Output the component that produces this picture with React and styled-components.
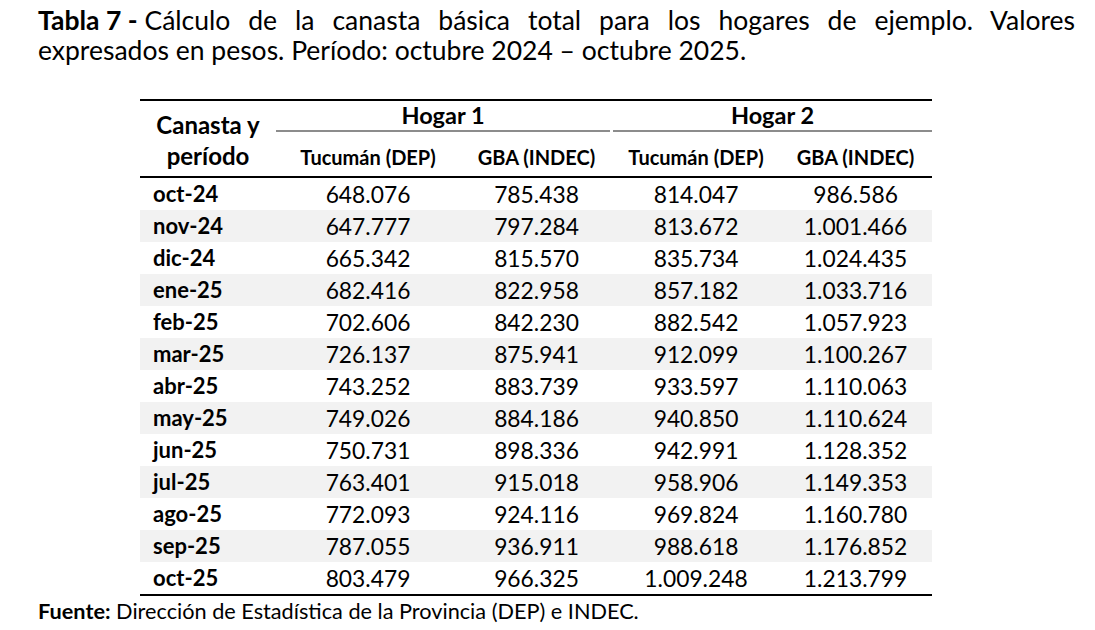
import React from 'react';
import styled, { createGlobalStyle } from 'styled-components';

const GlobalStyle = createGlobalStyle`
  html, body {
    margin: 0;
    padding: 0;
    background: #fff;
  }
  body {
    font-family: Lato, "Open Sans", sans-serif;
    color: #000;
  }
`;

const Page = styled.div`
  width: 1095px;
  height: 630px;
  box-sizing: border-box;
  padding: 5px 20px 0 38px;
  overflow: hidden;
`;

const Title = styled.div`
  width: 1037px;
  font-size: 26.5px;
  line-height: 30px;
  b {
    font-weight: 700;
  }
`;

const TitleLine = styled.div`
  white-space: nowrap;
  text-align: ${p => (p.$justify ? 'justify' : 'left')};
  text-align-last: ${p => (p.$justify ? 'justify' : 'left')};
  word-spacing: ${p => (p.$justify ? '-4px' : '0')};
`;

const Lead = styled.span`
  display: inline-block;
  word-spacing: 0;
`;

const Table = styled.table`
  margin: 34px 0 0 102px;
  width: 792px;
  border-collapse: collapse;
  table-layout: fixed;
`;

const HeadRow = styled.tr`
  height: ${p => p.$h}px;
  border-top: ${p => (p.$top ? '2px solid #000' : 'none')};
  border-bottom: ${p => (p.$bottom ? '2px solid #000' : 'none')};
`;

const CornerCell = styled.th`
  padding: 2px 0 0;
  font-size: 24px;
  font-weight: 700;
  line-height: 31px;
  text-align: center;
  vertical-align: middle;
`;

const GroupCell = styled.th`
  padding: 0;
  vertical-align: bottom;
`;

const GroupLabel = styled.div`
  margin-right: ${p => p.$gap}px;
  border-bottom: 2px solid #8c8c8c;
  font-size: 23.5px;
  font-weight: 700;
  line-height: 29px;
  text-align: center;
`;

const SubCell = styled.th`
  padding: 6px 0 0;
  font-size: 20px;
  font-weight: 700;
  text-align: center;
  vertical-align: middle;
`;

const Row = styled.tr`
  height: 32px;
  background: ${p => (p.$striped ? '#f2f2f2' : '#fff')};
  border-bottom: ${p => (p.$last ? '2px solid #000' : 'none')};
`;

const PeriodCell = styled.td`
  padding: 0 0 0 13px;
  font-size: 22px;
  font-weight: 700;
  line-height: 32px;
  text-align: left;
`;

const ValueCell = styled.td`
  padding: 0;
  font-size: 22.8px;
  line-height: 32px;
  text-align: center;
`;

const Source = styled.p`
  margin: 2px 0 0;
  font-size: 21.7px;
  line-height: 26px;
  b {
    font-weight: 700;
  }
`;

const rows = [
  ['oct-24', '648.076', '785.438', '814.047', '986.586'],
  ['nov-24', '647.777', '797.284', '813.672', '1.001.466'],
  ['dic-24', '665.342', '815.570', '835.734', '1.024.435'],
  ['ene-25', '682.416', '822.958', '857.182', '1.033.716'],
  ['feb-25', '702.606', '842.230', '882.542', '1.057.923'],
  ['mar-25', '726.137', '875.941', '912.099', '1.100.267'],
  ['abr-25', '743.252', '883.739', '933.597', '1.110.063'],
  ['may-25', '749.026', '884.186', '940.850', '1.110.624'],
  ['jun-25', '750.731', '898.336', '942.991', '1.128.352'],
  ['jul-25', '763.401', '915.018', '958.906', '1.149.353'],
  ['ago-25', '772.093', '924.116', '969.824', '1.160.780'],
  ['sep-25', '787.055', '936.911', '988.618', '1.176.852'],
  ['oct-25', '803.479', '966.325', '1.009.248', '1.213.799'],
];

export default function App() {
  return (
    <>
      <GlobalStyle />
      <Page>
        <Title>
          <TitleLine $justify>
            <Lead>
              <b>Tabla 7 -</b> Cálculo
            </Lead>{' '}
            de la canasta básica total para los hogares de ejemplo. Valores
          </TitleLine>
          <TitleLine>expresados en pesos. Período: octubre 2024 – octubre 2025.</TitleLine>
        </Title>
        <Table>
          <colgroup>
            <col style={{ width: 136 }} />
            <col style={{ width: 184 }} />
            <col style={{ width: 153 }} />
            <col style={{ width: 166 }} />
            <col style={{ width: 153 }} />
          </colgroup>
          <thead>
            <HeadRow $h={31} $top>
              <CornerCell rowSpan={2}>
                Canasta y
                <br />
                período
              </CornerCell>
              <GroupCell colSpan={2}>
                <GroupLabel $gap={3}>Hogar 1</GroupLabel>
              </GroupCell>
              <GroupCell colSpan={2}>
                <GroupLabel $gap={0}>Hogar 2</GroupLabel>
              </GroupCell>
            </HeadRow>
            <HeadRow $h={45} $bottom>
              <SubCell>Tucumán (DEP)</SubCell>
              <SubCell>GBA (INDEC)</SubCell>
              <SubCell>Tucumán (DEP)</SubCell>
              <SubCell>GBA (INDEC)</SubCell>
            </HeadRow>
          </thead>
          <tbody>
            {rows.map((r, i) => (
              <Row key={r[0]} $striped={i % 2 === 1} $last={i === rows.length - 1}>
                <PeriodCell>{r[0]}</PeriodCell>
                <ValueCell>{r[1]}</ValueCell>
                <ValueCell>{r[2]}</ValueCell>
                <ValueCell>{r[3]}</ValueCell>
                <ValueCell>{r[4]}</ValueCell>
              </Row>
            ))}
          </tbody>
        </Table>
        <Source>
          <b>Fuente:</b> Dirección de Estadística de la Provincia (DEP) e INDEC.
        </Source>
      </Page>
    </>
  );
}
